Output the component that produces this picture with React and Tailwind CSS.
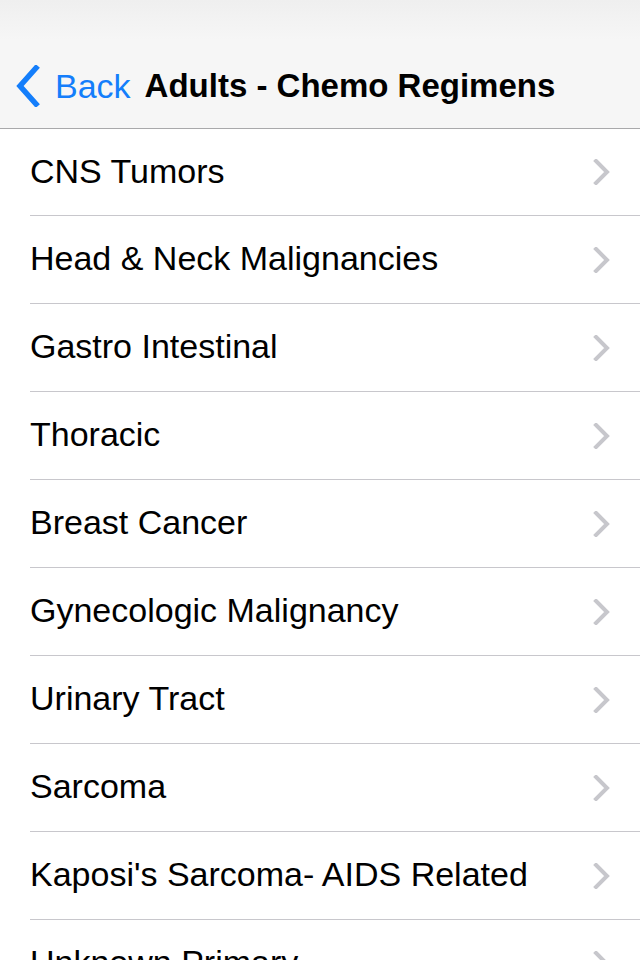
import React from "react";

const items = [
  "CNS Tumors",
  "Head & Neck Malignancies",
  "Gastro Intestinal",
  "Thoracic",
  "Breast Cancer",
  "Gynecologic Malignancy",
  "Urinary Tract",
  "Sarcoma",
  "Kaposi's Sarcoma- AIDS Related",
  "Unknown Primary",
];

function Chevron() {
  return (
    <svg width="18" height="26" viewBox="0 0 18 26" className="shrink-0">
      <path d="M3 2 L14 13 L3 24" fill="none" stroke="#c7c7cc" strokeWidth="4" strokeLinecap="square" />
    </svg>
  );
}

export default function App() {
  return (
    <div
      className="w-[640px] h-[960px] overflow-hidden bg-white"
      style={{ fontFamily: '"Liberation Sans", Arial, sans-serif' }}
    >
      <div className="relative h-[128px] bg-[#f6f6f6] border-b border-[#a9a9ab] box-content">
        <div className="absolute left-0 top-0 w-[640px] h-[40px] bg-gradient-to-b from-[#ececec] to-[#f6f6f6] opacity-70" />
        <div className="absolute inset-x-0 top-[40px] h-[88px] flex items-center">
          <svg width="30" height="42" viewBox="0 0 30 42" className="ml-[14px] mt-[4px]">
            <path d="M22 3 L6 21 L22 39" fill="none" stroke="#147efb" strokeWidth="5.5" strokeLinecap="square" />
          </svg>
          <span className="ml-[11px] text-[34px] text-[#147efb] leading-none mt-[3px]">Back</span>
          <span className="ml-[14px] text-[33px] font-bold text-black leading-none mt-[3px]">
            Adults - Chemo Regimens
          </span>
        </div>
      </div>
      <div>
        {items.map((it, i) => (
          <div key={i} className="pl-[30px]">
            <div
              className={
                "flex items-center justify-between pr-[29px] border-b border-[#c8c7cc] " +
                (i === 0 ? "h-[87px]" : "h-[88px]")
              }
            >
              <span className="text-[34px] text-black leading-none mb-[3px]">{it}</span>
              <Chevron />
            </div>
          </div>
        ))}
      </div>
    </div>
  );
}
